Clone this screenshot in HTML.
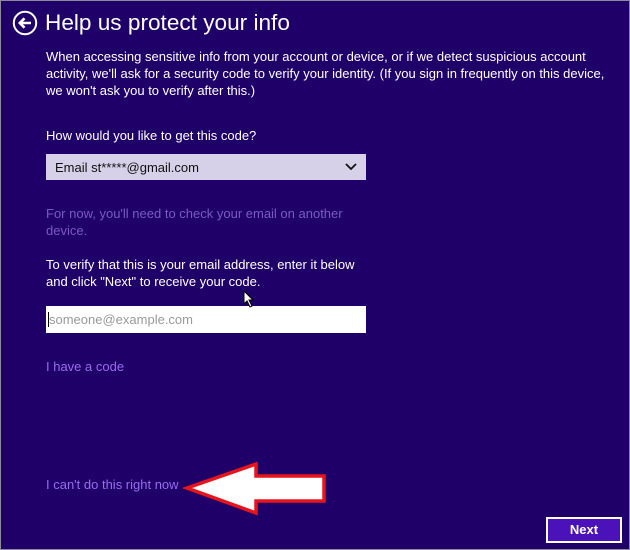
<!DOCTYPE html>
<html><head><style>
body{margin:0;width:630px;height:550px;overflow:hidden;background:#1f0068;font-family:"Liberation Sans",sans-serif;}
.frame{position:absolute;left:0;top:0;width:628px;height:548px;border:1px solid #8a8a9a;}
.t{position:absolute;color:#fff;font-size:13px;line-height:17px;white-space:nowrap;}
.l{color:#9a6cf0;}
</style></head><body>
<div class="frame"></div>
<svg style="position:absolute;left:12px;top:10px" width="26" height="26" viewBox="0 0 26 26"><circle cx="13" cy="13" r="11.2" fill="none" stroke="#fff" stroke-width="2"/><path d="M19 13H8M12.5 8.3L7.8 13l4.7 4.7" fill="none" stroke="#fff" stroke-width="2.6"/></svg>
<div class="t" style="left:45px;top:8px;font-size:22.6px;line-height:30px">Help us protect your info</div>
<div class="t" style="left:46px;top:48px">When accessing sensitive info from your account or device, or if we detect suspicious account<br>activity, we'll ask for a security code to verify your identity. (If you sign in frequently on this device,<br>we won't ask you to verify after this.)</div>
<div class="t" style="left:46px;top:127px">How would you like to get this code?</div>
<div style="position:absolute;left:46px;top:154px;width:320px;height:26px;background:#d6d1e8"></div>
<div class="t" style="left:55px;top:159px;color:#111">Email st*****@gmail.com</div>
<svg style="position:absolute;left:345px;top:163px" width="12" height="8"><path d="M1 1l5 5 5-5" fill="none" stroke="#111" stroke-width="1.8"/></svg>
<div class="t" style="left:46px;top:205px;color:#7a5cc0">For now, you'll need to check your email on another<br>device.</div>
<div class="t" style="left:46px;top:256px">To verify that this is your email address, enter it below<br>and click "Next" to receive your code.</div>
<div style="position:absolute;left:46px;top:306px;width:320px;height:27px;background:#fff"></div>
<div style="position:absolute;left:48px;top:312px;width:1px;height:15px;background:#000"></div>
<div class="t" style="left:49px;top:311px;color:#999">someone@example.com</div>
<svg style="position:absolute;left:243px;top:290px" width="12" height="18"><path d="M1 1v13l3-3 3 6 2-1-3-6h4z" fill="#fff" stroke="#000" stroke-width="1"/></svg>
<div class="t l" style="left:46px;top:358px">I have a code</div>
<div class="t l" style="left:46px;top:476px">I can't do this right now</div>
<svg style="position:absolute;left:0;top:0" width="630" height="550"><path d="M187 488L256 464V476H324V501H256V513Z" fill="#fff" stroke="#e8141c" stroke-width="3.5" stroke-linejoin="miter"/></svg>
<div style="position:absolute;left:546px;top:517px;width:72px;height:22px;border:2px solid #fff;background:#4a12b8;color:#fff;font-weight:bold;font-size:13px;line-height:22px;text-align:center">Next</div>
</body></html>
